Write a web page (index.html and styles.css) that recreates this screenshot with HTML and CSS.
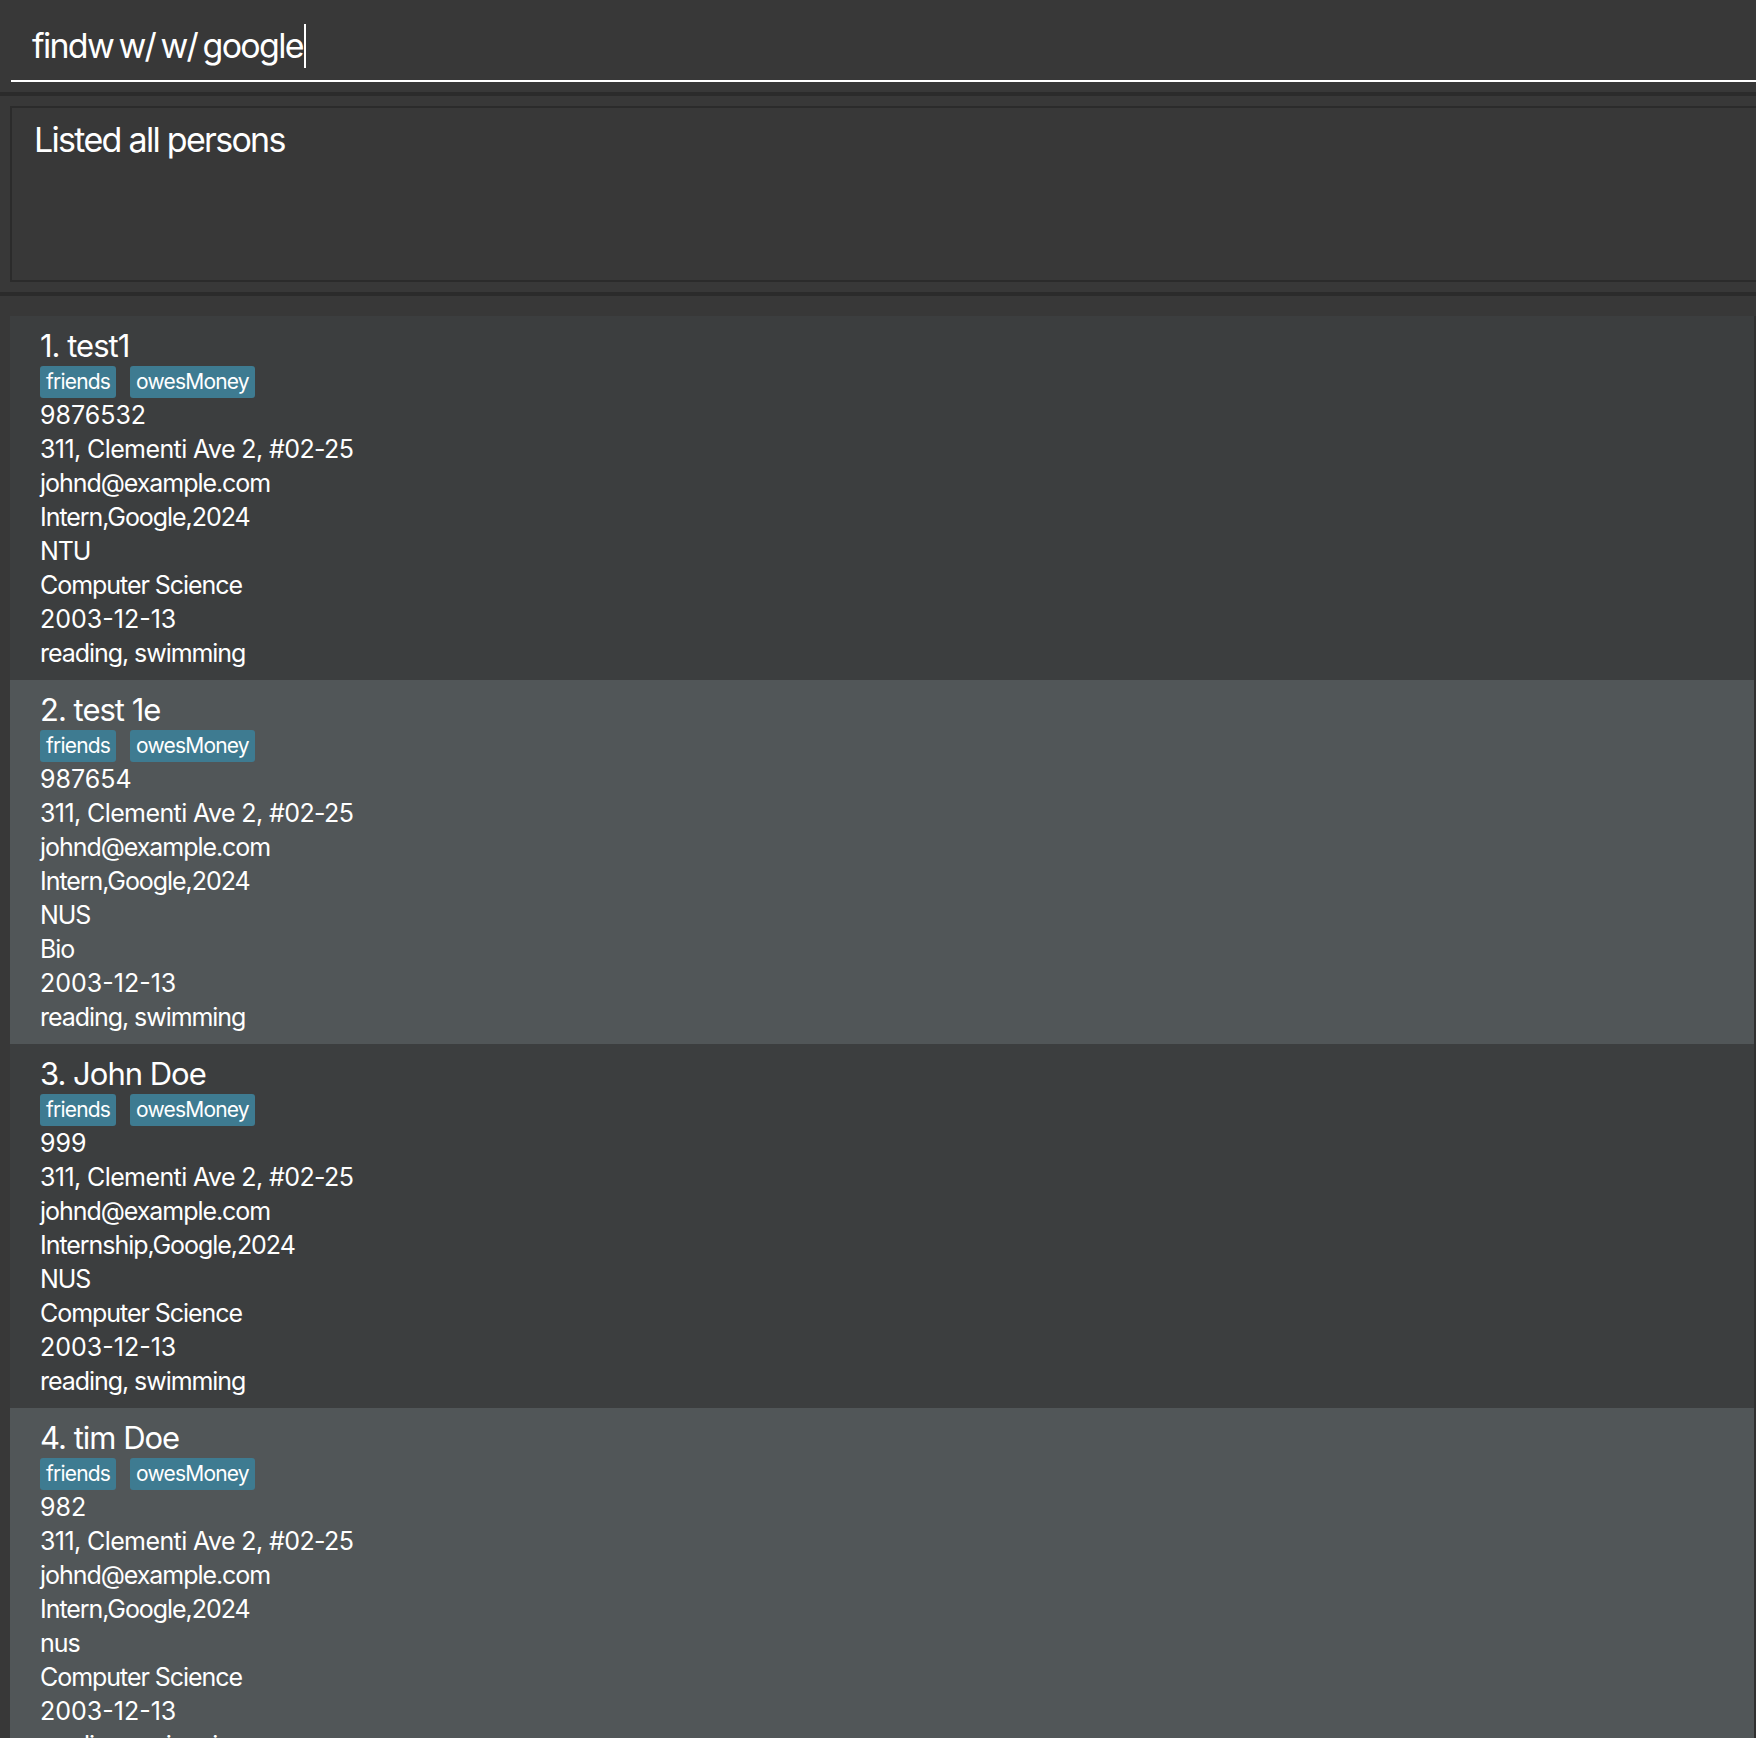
FILE: index.html
```html
<!DOCTYPE html>
<html>
<head>
<meta charset="utf-8">
<link rel="stylesheet" href="styles.css">
</head>
<body>
<div class="app">
  <div class="command-box">
    <div class="command-field"><span class="command-text">findw w/ w/ google</span><span class="caret"></span></div>
  </div>
  <div class="divider"></div>
  <div class="result-pane">
    <div class="result-box">Listed all persons</div>
  </div>
  <div class="divider"></div>
  <div class="list-pane">
    <div class="card card-odd">
      <div class="name">1. test1</div>
      <div class="tags"><span class="tag">friends</span><span class="tag">owesMoney</span></div>
      <div class="line num">9876532</div>
      <div class="line addr">311, Clementi Ave 2, #02-25</div>
      <div class="line">johnd@example.com</div>
      <div class="line">Intern,Google,2024</div>
      <div class="line">NTU</div>
      <div class="line">Computer Science</div>
      <div class="line num">2003-12-13</div>
      <div class="line">reading, swimming</div>
    </div>
    <div class="card card-even">
      <div class="name">2. test 1e</div>
      <div class="tags"><span class="tag">friends</span><span class="tag">owesMoney</span></div>
      <div class="line num">987654</div>
      <div class="line addr">311, Clementi Ave 2, #02-25</div>
      <div class="line">johnd@example.com</div>
      <div class="line">Intern,Google,2024</div>
      <div class="line">NUS</div>
      <div class="line">Bio</div>
      <div class="line num">2003-12-13</div>
      <div class="line">reading, swimming</div>
    </div>
    <div class="card card-odd">
      <div class="name">3. John Doe</div>
      <div class="tags"><span class="tag">friends</span><span class="tag">owesMoney</span></div>
      <div class="line num">999</div>
      <div class="line addr">311, Clementi Ave 2, #02-25</div>
      <div class="line">johnd@example.com</div>
      <div class="line">Internship,Google,2024</div>
      <div class="line">NUS</div>
      <div class="line">Computer Science</div>
      <div class="line num">2003-12-13</div>
      <div class="line">reading, swimming</div>
    </div>
    <div class="card card-even">
      <div class="name">4. tim Doe</div>
      <div class="tags"><span class="tag">friends</span><span class="tag">owesMoney</span></div>
      <div class="line num">982</div>
      <div class="line addr">311, Clementi Ave 2, #02-25</div>
      <div class="line">johnd@example.com</div>
      <div class="line">Intern,Google,2024</div>
      <div class="line">nus</div>
      <div class="line">Computer Science</div>
      <div class="line num">2003-12-13</div>
      <div class="line">reading, swimming</div>
    </div>
  </div>
</div>
</body>
</html>
```

FILE: styles.css
```css
html, body {
  margin: 0;
  padding: 0;
  background: #383838;
}

body {
  width: 1756px;
  height: 1738px;
  overflow: hidden;
  font-family: Inter, "Noto Sans", "Liberation Sans", sans-serif;
  color: #ffffff;
}

.app {
  display: flex;
  flex-direction: column;
}

.command-box {
  height: 92px;
  box-sizing: border-box;
  padding-left: 11px;
  background: #383838;
}

.command-field {
  height: 82px;
  box-sizing: border-box;
  border-bottom: 2px solid #ffffff;
  padding: 24px 0 0 21px;
  display: flex;
  align-items: flex-start;
}

.command-text {
  font-size: 34px;
  line-height: 44px;
  letter-spacing: -1.7px;
  word-spacing: -2.5px;
  white-space: pre;
}

.caret {
  display: inline-block;
  width: 2px;
  height: 44px;
  background: #ffffff;
  margin-left: 1px;
}

.divider {
  height: 4px;
  background: #2b2b2b;
}

.result-pane {
  height: 196px;
  box-sizing: border-box;
  padding: 10px 0 10px 10px;
  background: #383838;
}

.result-box {
  height: 176px;
  box-sizing: border-box;
  border: 2px solid #2b2b2b;
  border-right: none;
  padding: 10px 0 0 22px;
  font-size: 34px;
  line-height: 44px;
  letter-spacing: -1.7px;
}

.list-pane {
  padding: 20px 0 0 10px;
  display: flex;
  flex-direction: column;
}

.card {
  height: 364px;
  box-sizing: border-box;
  padding: 10px 0 10px 30px;
  display: flex;
  flex-direction: column;
  align-items: flex-start;
  border-right: 2px solid #303030;
}

.card-odd {
  background: #3c3e3f;
}

.card-even {
  background: #515658;
}

.name {
  font-size: 31px;
  line-height: 40px;
  letter-spacing: -1.0px;
  height: 40px;
}

.tags {
  display: flex;
  gap: 14px;
  height: 32px;
}

.tag {
  background: #3e7b91;
  border-radius: 3px;
  height: 32px;
  box-sizing: border-box;
  padding: 0 6px;
  font-size: 21px;
  line-height: 32px;
  letter-spacing: -0.8px;
}

.line {
  font-size: 25px;
  line-height: 34px;
  height: 34px;
  letter-spacing: -1.05px;
}

.line.num {
  letter-spacing: 0;
}

.line.addr {
  letter-spacing: -0.6px;
}
```
